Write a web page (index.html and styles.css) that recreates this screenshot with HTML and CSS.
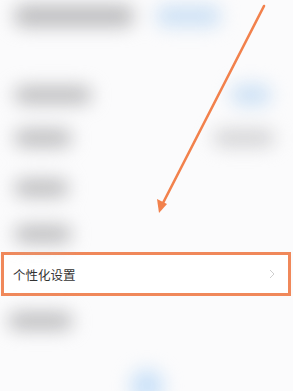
FILE: index.html
```html
<!DOCTYPE html>
<html lang="zh">
<head>
<meta charset="utf-8">
<link rel="stylesheet" href="styles.css">
</head>
<body>
<div class="page">
  <div class="blur top">
    <div class="row r1"><span class="bar g w120"></span><span class="bar b w65"></span></div>
    <div class="row r2"><span class="bar g w78"></span><span class="bar b w40"></span></div>
    <div class="row r3"><span class="bar g w58"></span><span class="bar g2 w62"></span></div>
    <div class="row r4"><span class="bar g w55"></span></div>
    <div class="row r5"><span class="bar g w58"></span></div>
  </div>
  <div class="highlight">
    <span class="label">个性化设置</span>
    <svg class="chev" width="6" height="10" viewBox="0 0 6 10"><path d="M1 1l4 4-4 4" fill="none" stroke="#cfcfcf" stroke-width="1"/></svg>
  </div>
  <div class="blur bottom">
    <div class="row r6"><span class="bar g w65"></span></div>
    <div class="row r7"><span class="bar b w35 bb"></span></div>
  </div>
  <svg class="arrow" width="293" height="391" viewBox="0 0 293 391">
    <line x1="264" y1="6" x2="163" y2="203" stroke="#f2814c" stroke-width="2.6" stroke-linecap="round"/>
    <polygon points="159,213 157,199 167,204" fill="#f2814c"/>
  </svg>
</div>
</body>
</html>
```
FILE: styles.css
```css
html, body { margin: 0; padding: 0; }
body {
  width: 293px;
  height: 391px;
  overflow: hidden;
  background: #fbfbfc;
  font-family: "Noto Sans CJK SC", "Noto Sans", sans-serif;
}
.page {
  position: relative;
  width: 293px;
  height: 391px;
  display: flex;
  flex-direction: column;
}
.blur { filter: blur(9px); }
.top { height: 252px; flex-shrink: 0; display: flex; flex-direction: column; }
.row {
  display: flex;
  flex-shrink: 0;
  justify-content: space-between;
  align-items: center;
  padding: 0 20px 0 14px;
}
.r1 { height: 30px; padding-right: 72px; align-items: flex-start; padding-top: 5px; }
.r2 { height: 40px; margin-top: 40px; padding-right: 22px; }
.r3 { height: 30px; margin-top: 8px; padding-right: 18px; }
.r4 { height: 30px; margin-top: 20px; }
.r5 { height: 30px; margin-top: 16px; }
.bar { display: block; height: 18px; border-radius: 9px; }
.g { background: #bdbdbf; }
.g2 { background: #d4d4d6; }
.b { background: #cfe2f5; height: 22px; }
.w120 { width: 120px; height: 22px; }
.w78 { width: 78px; }
.w65 { width: 65px; }
.w62 { width: 62px; }
.w58 { width: 58px; }
.w55 { width: 55px; }
.w40 { width: 40px; }
.w35 { width: 35px; }
.highlight {
  flex-shrink: 0;
  margin-left: 1px;
  width: 290px;
  height: 44px;
  box-sizing: border-box;
  border: 3px solid #f0885a;
  background: #ffffff;
  display: flex;
  align-items: center;
  justify-content: space-between;
  padding: 0 13px 0 9px;
}
.label { font-size: 12.5px; color: #333333; }
.bottom { flex: 1; display: flex; flex-direction: column; }
.r6 { height: 30px; margin-top: 10px; padding-left: 8px; }
.r7 { justify-content: center; padding: 0; margin-top: 30px; height: 40px; }
.bb { width: 34px; height: 34px; border-radius: 17px; background: #cce2f8; }
.arrow { position: absolute; left: 0; top: 0; }
```
